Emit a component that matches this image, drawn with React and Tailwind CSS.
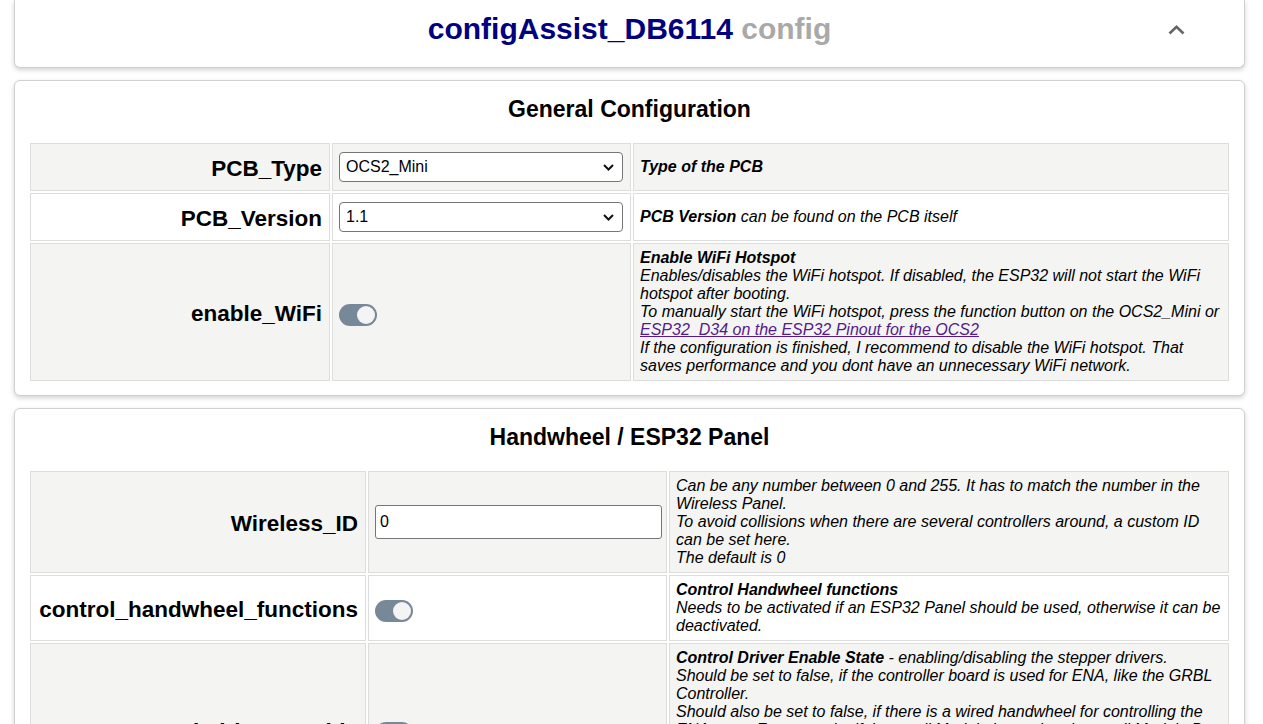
import React from "react";

const FONT = { fontFamily: "'Liberation Sans', Arial, sans-serif" };

function Toggle() {
  return (
    <span className="relative mt-[5px] inline-block h-[22px] w-[38px] rounded-full bg-[#778899]">
      <span className="absolute right-[2px] top-[2px] h-[18px] w-[18px] rounded-full bg-[#f4f4f4]" />
    </span>
  );
}

function Select({ value }) {
  return (
    <div className="relative flex h-[30px] w-[284px] items-center rounded-[4px] border border-[#767676] bg-white pl-[6px] text-[16px] text-black">
      {value}
      <svg
        className="absolute right-[8px] top-[11px]"
        width="11"
        height="7"
        viewBox="0 0 11 7"
      >
        <polyline
          points="1,1 5.5,5.5 10,1"
          fill="none"
          stroke="#111"
          strokeWidth="2"
        />
      </svg>
    </div>
  );
}

function Row({ gray, label, control, children }) {
  const bg = gray ? "bg-[#f4f4f3]" : "bg-white";
  return (
    <>
      <div
        className={`flex items-center justify-end border border-[#dddddd] ${bg} pt-[3px] pl-[7px] pr-[7px] text-[22.5px] font-bold text-black`}
      >
        {label}
      </div>
      <div
        className={`flex items-center border border-[#dddddd] ${bg} py-[8px] pl-[6px] pr-[4px]`}
      >
        {control}
      </div>
      <div
        className={`flex items-center border border-[#dddddd] ${bg} py-[5px] pl-[6px] pr-[3px] text-[16px] leading-[18px] italic text-black`}
      >
        <div>{children}</div>
      </div>
    </>
  );
}

function Card({ title, cols, children }) {
  return (
    <section className="mt-[12px] rounded-[6px] border border-[#d0d0d0] bg-white px-[15px] pt-[15px] pb-[14px] shadow-[0_2px_5px_rgba(0,0,0,0.18)]">
      <h2 className="mb-[20px] text-center text-[23px] leading-[27px] font-bold text-black">
        {title}
      </h2>
      <div className={`grid gap-[2px] ${cols}`}>{children}</div>
    </section>
  );
}

export default function App() {
  return (
    <div className="h-[724px] overflow-hidden bg-white" style={FONT}>
      <div className="ml-[14px] w-[1231px]">
        {/* Header */}
        <header className="grid h-[68px] grid-cols-[1fr_auto_1fr] items-start rounded-b-[6px] border-x border-b border-[#d0d0d0] bg-white pt-[12px] shadow-[0_2px_5px_rgba(0,0,0,0.18)]">
          <div />
          <h1 className="text-[30px] leading-[34px] font-bold">
            <span className="text-[#000080]">configAssist_DB6114</span>{" "}
            <span className="text-[#a9a9a9]">config</span>
          </h1>
          <div className="flex justify-end pr-[59px] pt-[13px]">
            <svg width="17" height="10" viewBox="0 0 17 10">
              <polyline
                points="1.5,8.5 8.5,1.8 15.5,8.5"
                fill="none"
                stroke="#666"
                strokeWidth="2.6"
              />
            </svg>
          </div>
        </header>

        <Card title="General Configuration" cols="grid-cols-[300px_299px_1fr]">
          <Row gray label="PCB_Type" control={<Select value="OCS2_Mini" />}>
            <b>Type of the PCB</b>
          </Row>
          <Row label="PCB_Version" control={<Select value="1.1" />}>
            <b>PCB Version</b> can be found on the PCB itself
          </Row>
          <Row gray label="enable_WiFi" control={<Toggle />}>
            <b>Enable WiFi Hotspot</b>
            <br />
            Enables/disables the WiFi hotspot. If disabled, the ESP32 will not
            start the WiFi hotspot after booting.
            <br />
            To manually start the WiFi hotspot, press the function button on the
            OCS2_Mini or{" "}
            <a href="#" className="text-[#551a8b] underline">
              ESP32_D34 on the ESP32 Pinout for the OCS2
            </a>
            <br />
            If the configuration is finished, I recommend to disable the WiFi
            hotspot. That saves performance and you dont have an unnecessary
            WiFi network.
          </Row>
        </Card>

        <Card title="Handwheel / ESP32 Panel" cols="grid-cols-[336px_299px_1fr]">
          <Row
            gray
            label="Wireless_ID"
            control={
              <div className="flex h-[34px] w-[288px] items-center rounded-[3px] border border-[#767676] bg-white pl-[4px] text-[16px] text-black">
                0
              </div>
            }
          >
            Can be any number between 0 and 255. It has to match the number in
            the Wireless Panel.
            <br />
            To avoid collisions when there are several controllers around, a
            custom ID can be set here.
            <br />
            The default is 0
          </Row>
          <Row label="control_handwheel_functions" control={<Toggle />}>
            <b>Control Handwheel functions</b>
            <br />
            Needs to be activated if an ESP32 Panel should be used, otherwise it
            can be deactivated.
          </Row>
          <Row gray label="control_driver_enable" control={<Toggle />}>
            <b>Control Driver Enable State</b> - enabling/disabling the stepper
            drivers.
            <br />
            Should be set to false, if the controller board is used for ENA, like
            the GRBL Controller.
            <br />
            Should also be set to false, if there is a wired handwheel for
            controlling the ENA state. For example, if the small Module is used
            or the small Module Pro is used.
            <br />
            If set to true, the drivers are enabled while the handwheel is
            active and disabled again after the timeout.
            <br />
            The default is true
          </Row>
        </Card>
      </div>
    </div>
  );
}
